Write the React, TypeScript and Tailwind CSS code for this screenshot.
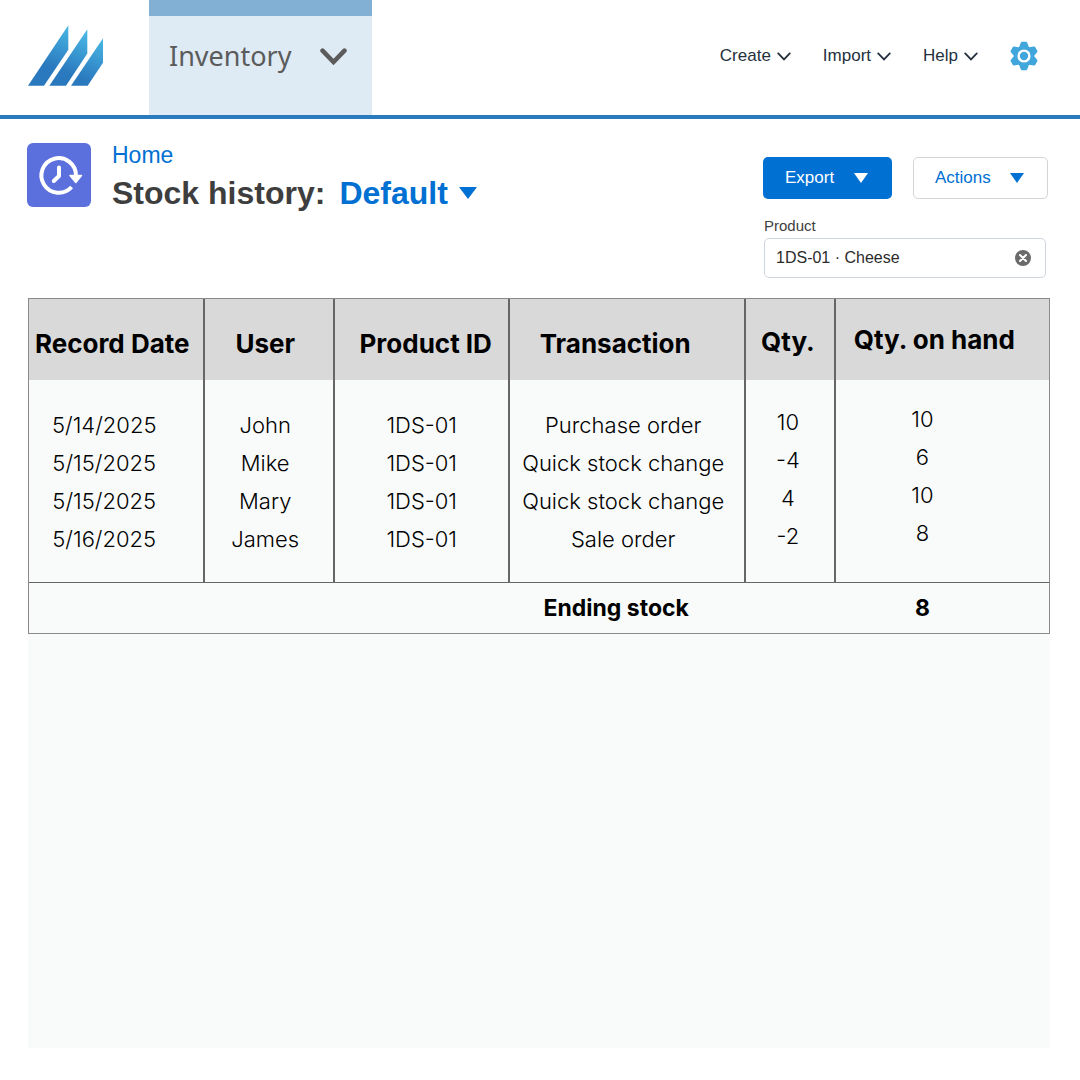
import { useState } from 'react';
import { clsx } from 'clsx';

interface StockRecord {
  date: string;
  user: string;
  productId: string;
  transaction: string;
  qty: number;
  onHand: number;
}

interface Column {
  key: keyof StockRecord;
  label: string;
  width: string;
  head: string;
  cell: string;
}

const columns: Column[] = [
  { key: 'date', label: 'Record Date', width: 'w-[17.3%]', head: 'pt-2 pr-2', cell: 'pr-6' },
  { key: 'user', label: 'User', width: 'w-[12.7%]', head: 'pt-2 pr-2', cell: 'pr-2' },
  { key: 'productId', label: 'Product ID', width: 'w-[17.2%]', head: 'pt-2 pl-2', cell: '' },
  { key: 'transaction', label: 'Transaction', width: 'w-[23.1%]', head: 'pt-2 pr-6', cell: 'pr-2' },
  { key: 'qty', label: 'Qty.', width: 'w-[8.8%]', head: 'pt-1 pr-1', cell: 'pr-1 pb-1.5' },
  { key: 'onHand', label: 'Qty. on hand', width: 'w-[20.9%]', head: 'pr-4', cell: 'pr-10 pb-3' },
];

const records: StockRecord[] = [
  { date: '5/14/2025', user: 'John', productId: '1DS-01', transaction: 'Purchase order', qty: 10, onHand: 10 },
  { date: '5/15/2025', user: 'Mike', productId: '1DS-01', transaction: 'Quick stock change', qty: -4, onHand: 6 },
  { date: '5/15/2025', user: 'Mary', productId: '1DS-01', transaction: 'Quick stock change', qty: 4, onHand: 10 },
  { date: '5/16/2025', user: 'James', productId: '1DS-01', transaction: 'Sale order', qty: -2, onHand: 8 },
];

const menus = ['Create', 'Import', 'Help'];

function Logo() {
  return (
    <svg className="w-[75px] h-[61px]" viewBox="84 75 225 182" aria-hidden="true">
      <defs>
        <linearGradient id="logo-fill" gradientUnits="userSpaceOnUse" x1="250" y1="80" x2="190" y2="235">
          <stop offset="0" stopColor="#4bbde8" />
          <stop offset="0.9" stopColor="#2a78bd" />
          <stop offset="1" stopColor="#2a78bd" />
        </linearGradient>
      </defs>
      <g fill="url(#logo-fill)">
        <path d="M84 257 205 75V149L132 257Z" />
        <path d="M148 257 262 87V160L198 257Z" />
        <path d="M213 257 309 114V188L263 257Z" />
      </g>
    </svg>
  );
}

function Chevron({ className, strokeWidth }: { className: string; strokeWidth: number }) {
  return (
    <svg className={className} viewBox="0 0 14 9" fill="none" stroke="currentColor" strokeWidth={strokeWidth} strokeLinecap="round" aria-hidden="true">
      <path d="M1.2 1.4 7 7.4 12.8 1.4" />
    </svg>
  );
}

function Caret({ className }: { className: string }) {
  return (
    <svg className={className} viewBox="0 0 18 12" preserveAspectRatio="none" fill="currentColor" aria-hidden="true">
      <path d="M0 0H18L9 12Z" />
    </svg>
  );
}

function GearIcon() {
  return (
    <svg className="w-7 h-[30px]" viewBox="-14 -15 28 30" aria-hidden="true">
      <g fill="#41a6dc" stroke="#41a6dc">
        <circle r="10" stroke="none" />
        {[0, 60, 120, 180, 240, 300].map((angle) => (
          <path key={angle} d="M-4 -8 -2 -13H2L4 -8Z" strokeWidth="2.4" strokeLinejoin="round" transform={`rotate(${angle})`} />
        ))}
      </g>
      <circle r="5.4" fill="none" stroke="#fff" strokeWidth="2.4" />
    </svg>
  );
}

function HistoryIcon() {
  return (
    <svg className="w-16 h-16 shrink-0" viewBox="0 0 64 64" aria-hidden="true">
      <rect width="64" height="64" rx="6" fill="#5b70dd" />
      <g fill="none" stroke="#fff" strokeWidth="4" strokeLinecap="round" strokeLinejoin="round">
        <path d="M49 33A17.3 17.3 0 1 0 44.6 44" strokeLinecap="butt" />
        <path d="M32 24.5V33L26.8 38" />
      </g>
      <path d="M43 32.5H54.5L48.8 39.5Z" fill="#fff" stroke="#fff" strokeWidth="1.5" strokeLinejoin="round" />
    </svg>
  );
}

function TopBar() {
  return (
    <header className="flex h-[119px] items-stretch border-b-4 border-[#2a7bbd]">
      <a href="#" aria-label="Dashboard" className="flex w-[149px] shrink-0 items-center pl-7 pb-1">
        <Logo />
      </a>
      <button
        type="button"
        className="flex w-[223px] items-center justify-between border-t-16 border-[#82b0d5] bg-[#deeaf4] pl-5 pr-[25px] pb-[18px] font-['Noto_Sans'] text-[27px] text-[#5b5b5b]"
      >
        Inventory
        <Chevron className="w-[27px] h-[17px]" strokeWidth={2.4} />
      </button>
      <nav className="ml-auto flex items-center gap-8 pr-[42px] pb-[3px]">
        {menus.map((menu) => (
          <button key={menu} type="button" className="flex items-center gap-1.5 text-[17px] text-[#24303e]">
            {menu}
            <Chevron className="w-[14px] h-[9px]" strokeWidth={1.8} />
          </button>
        ))}
        <button type="button" aria-label="Settings">
          <GearIcon />
        </button>
      </nav>
    </header>
  );
}

function PageHeading() {
  const [product, setProduct] = useState('1DS-01 · Cheese');

  return (
    <section className="flex items-start justify-between pt-6 pl-[27px] pr-8">
      <div className="flex gap-[21px]">
        <HistoryIcon />
        <div>
          <a href="#" className="block text-[23px] leading-6 text-[#0070d2]">
            Home
          </a>
          <div className="mt-1.5 flex items-center gap-[14px] text-[32px] leading-10 font-bold">
            <h1 className="text-[#3e3e3e]">Stock history:</h1>
            <button type="button" className="flex items-center gap-[11px] text-[#0070d2]">
              Default
              <Caret className="w-[18px] h-3" />
            </button>
          </div>
        </div>
      </div>

      <div className="w-[285px] pt-[14px]">
        <div className="flex justify-between text-[17px]">
          <button type="button" className="flex h-[42px] w-[129px] items-center justify-between rounded-[5px] bg-[#0070d2] pl-[22px] pr-6 text-white">
            Export
            <Caret className="w-[14px] h-[10px]" />
          </button>
          <button
            type="button"
            className="flex h-[42px] w-[135px] items-center justify-between rounded-[5px] border border-[#d4d4d4] bg-white pl-[21px] pr-[23px] text-[#0070d2]"
          >
            Actions
            <Caret className="w-[14px] h-[10px]" />
          </button>
        </div>
        <label htmlFor="product" className="mt-[17px] ml-px block text-[15px] leading-5 text-[#3e3e3e]">
          Product
        </label>
        <div className="mt-0.5 ml-px mr-0.5 flex h-10 items-center rounded-[5px] border border-[#cfd5df] bg-white pl-[11px] pr-[14px]">
          <input
            id="product"
            value={product}
            onChange={(e) => setProduct(e.target.value)}
            className="min-w-0 flex-1 text-base text-[#2b2b2b] outline-none"
          />
          <button type="button" aria-label="Clear product" onClick={() => setProduct('')}>
            <svg className="w-4 h-4" viewBox="0 0 16 16" aria-hidden="true">
              <circle cx="8" cy="8" r="8" fill="#6b6b6b" />
              <path d="M5 5 11 11M11 5 5 11" stroke="#fff" strokeWidth="2" strokeLinecap="round" />
            </svg>
          </button>
        </div>
      </div>
    </section>
  );
}

function StockTable() {
  return (
    <table className="w-full table-fixed border-separate border-spacing-0 border border-[#8a8a8a] font-[Inter] text-black">
      <colgroup>
        {columns.map((col) => (
          <col key={col.key} className={col.width} />
        ))}
      </colgroup>
      <thead className="bg-[#d9d9d9]">
        <tr>
          {columns.map((col) => (
            <th key={col.key} scope="col" className="border-r-2 border-[#666666] p-0 text-[26px] font-bold last:border-r-0">
              <div className={clsx('flex h-[81px] items-center justify-center whitespace-nowrap', col.head)}>{col.label}</div>
            </th>
          ))}
        </tr>
      </thead>
      <tbody>
        {records.map((record, i) => (
          <tr key={i}>
            {columns.map((col) => (
              <td
                key={col.key}
                className={clsx(
                  'border-r-2 border-[#666666] p-0 text-[22px] font-light last:border-r-0',
                  i === 0 && 'pt-[26px]',
                  i === records.length - 1 && 'pb-6'
                )}
              >
                <div className={clsx('flex h-[38px] items-center justify-center whitespace-nowrap', col.cell)}>{record[col.key]}</div>
              </td>
            ))}
          </tr>
        ))}
      </tbody>
      <tfoot>
        <tr className="h-[51px] text-[23px]">
          <td colSpan={3} className="border-t border-[#666666]" />
          <th scope="row" className="border-t border-[#666666] p-0 pr-6 font-bold">
            Ending stock
          </th>
          <td className="border-t border-[#666666]" />
          <td className="border-t border-[#666666] p-0 pr-10 text-center font-bold">8</td>
        </tr>
      </tfoot>
    </table>
  );
}

export default function App() {
  return (
    <div className="flex min-h-screen flex-col bg-white font-['Liberation_Sans',Arial,sans-serif]">
      <TopBar />
      <PageHeading />
      <main className="mt-5 ml-7 mr-[30px] mb-8 flex-1 bg-[#f9fbfa]">
        <StockTable />
      </main>
    </div>
  );
}
